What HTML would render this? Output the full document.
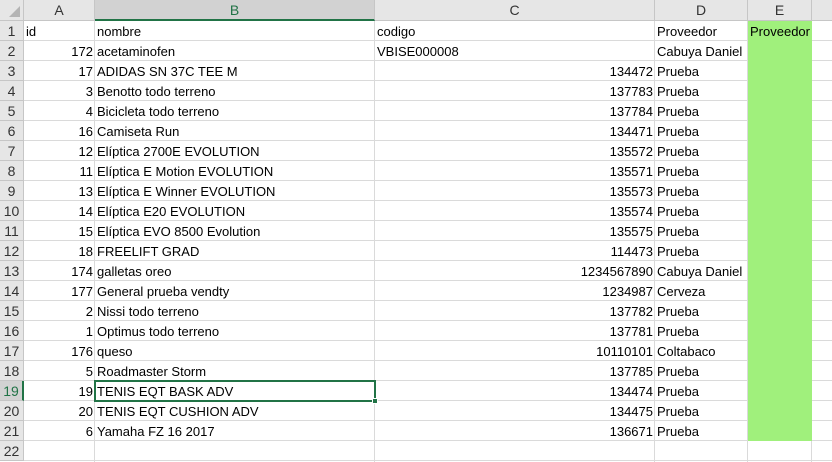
<!DOCTYPE html>
<html><head><style>
body{margin:0;width:832px;height:462px;overflow:hidden;background:#fff;font-family:"Liberation Sans",sans-serif;font-size:13px;color:#000;position:relative}
div{position:absolute;box-sizing:border-box;white-space:nowrap}
.h{background:#e6e6e6;color:#333;text-align:center;line-height:21px;height:21px;top:0;border-right:1px solid #c6c6c6;border-bottom:1px solid #c6c6c6;font-size:14px}
.hs{background:#d2d2d2;color:#217346;border-bottom:2px solid #217346}
.vl{top:21px;height:441px;width:1px;background:#dadada}
.hl{left:24px;width:808px;height:1px;background:#dadada}
.rh{left:0;width:24px;height:20px;background:#e6e6e6;color:#333;text-align:center;line-height:20px;border-right:1px solid #c6c6c6;border-bottom:1px solid #c6c6c6;font-size:14px}
.c{height:20px;line-height:21px;padding:0 2px}
.r{text-align:right}
</style></head><body>
<div class="h" style="left:0;width:24px"><svg width="24" height="21" style="position:absolute;left:0;top:0"><polygon points="20,6 20,17 9,17" fill="#b4b4b4"/></svg></div>
<div class="h" style="left:24px;width:71px">A</div>
<div class="h hs" style="left:95px;width:280px">B</div>
<div class="h" style="left:375px;width:280px">C</div>
<div class="h" style="left:655px;width:93px">D</div>
<div class="h" style="left:748px;width:64px">E</div>
<div class="h" style="left:812px;width:20px;border-right:none"></div>
<div class="vl" style="left:94px"></div>
<div class="vl" style="left:374px"></div>
<div class="vl" style="left:654px"></div>
<div class="vl" style="left:747px"></div>
<div class="vl" style="left:811px"></div>
<div id="rows"></div>
<div style="left:748px;top:21px;width:64px;height:420px;background:#a0f07c"></div>
<div class="c" style="top:21px;left:748px">Proveedor</div>
<script>
const d=[["id","nombre","codigo","Proveedor"],
["172","acetaminofen","VBISE000008","Cabuya Daniel"],
["17","ADIDAS SN 37C TEE M","134472","Prueba"],
["3","Benotto todo terreno","137783","Prueba"],
["4","Bicicleta todo terreno","137784","Prueba"],
["16","Camiseta Run","134471","Prueba"],
["12","Elíptica 2700E EVOLUTION","135572","Prueba"],
["11","Elíptica E Motion EVOLUTION","135571","Prueba"],
["13","Elíptica E Winner EVOLUTION","135573","Prueba"],
["14","Elíptica E20 EVOLUTION","135574","Prueba"],
["15","Elíptica EVO 8500 Evolution","135575","Prueba"],
["18","FREELIFT GRAD","114473","Prueba"],
["174","galletas oreo","1234567890","Cabuya Daniel"],
["177","General prueba vendty","1234987","Cerveza"],
["2","Nissi todo terreno","137782","Prueba"],
["1","Optimus todo terreno","137781","Prueba"],
["176","queso","10110101","Coltabaco"],
["5","Roadmaster Storm","137785","Prueba"],
["19","TENIS EQT BASK ADV","134474","Prueba"],
["20","TENIS EQT CUSHION ADV","134475","Prueba"],
["6","Yamaha FZ 16 2017","136671","Prueba"]];
let h="";
for(let i=0;i<22;i++){const t=21+i*20;
h+=`<div class="rh" style="top:${t}px;${i==18?'background:#d2d2d2;color:#217346;border-right:2px solid #217346':''}">${i+1}</div>`;
h+=`<div class="hl" style="top:${t+19}px"></div>`;
const r=d[i];if(!r)continue;
const hdr=i==0,code=i==1;
h+=`<div class="c ${hdr?'':'r'}" style="top:${t}px;left:24px;width:71px">${r[0]}</div>`;
h+=`<div class="c" style="top:${t}px;left:95px">${r[1]}</div>`;
h+=`<div class="c ${hdr||code?'':'r'}" style="top:${t}px;left:375px;width:280px">${r[2]}</div>`;
h+=`<div class="c" style="top:${t}px;left:655px">${r[3]}</div>`;}
document.getElementById("rows").innerHTML=h;
</script>
<div style="left:94px;top:380px;width:282px;height:22px;border:2px solid #217346"></div>
<div style="left:372px;top:398px;width:6px;height:6px;background:#217346;border:1px solid #fff"></div>
</body></html>
